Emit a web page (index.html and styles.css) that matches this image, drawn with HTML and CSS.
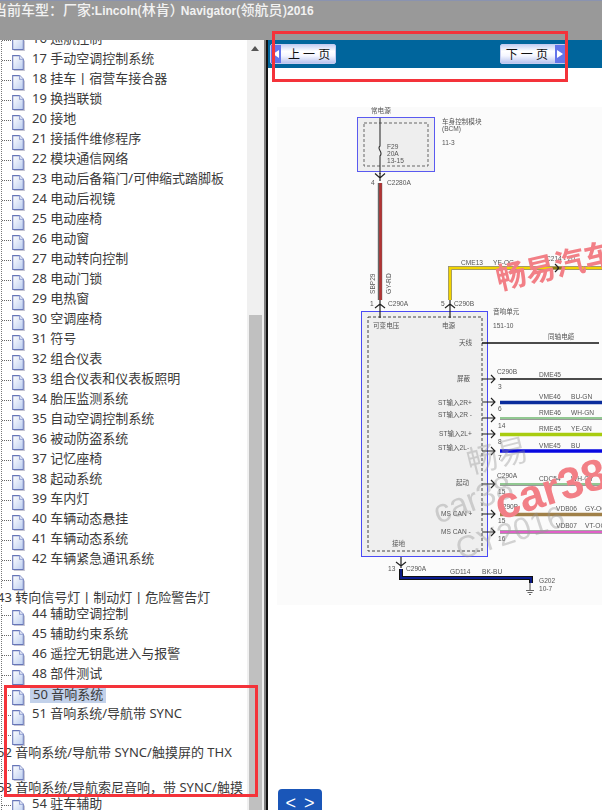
FILE: index.html
```html
<!DOCTYPE html>
<html lang="zh-CN">
<head>
    <meta charset="UTF-8">
    <title>维修手册</title>
    <link rel="stylesheet" href="styles.css">
</head>
<body>
    <svg class="defs" width="0" height="0">
        <defs>
            <linearGradient id="docFill" x1="0" y1="0" x2="1" y2="1">
                <stop offset="0" stop-color="#ffffff"/>
                <stop offset="1" stop-color="#bccef0"/>
            </linearGradient>
            <symbol id="doc" viewBox="0 0 13 16">
                <path d="M1.5 1.5H8L11.5 5V14.5H1.5Z" fill="url(#docFill)" stroke="#6675b8" stroke-width="1"/>
                <path d="M8 1.5V5H11.5" fill="#eef2fb" stroke="#8f9cd0" stroke-width="1"/>
                <path d="M2.5 15.5H12.5V6" fill="none" stroke="#c4c4d2" stroke-width="1"/>
            </symbol>
            <symbol id="chev" viewBox="-6 -4 12 8" overflow="visible">
                <path d="M-5 -3.5L0 1L5 -3.5M0 -4V4" fill="none" stroke="#222" stroke-width="1.2"/>
            </symbol>
        </defs>
    </svg>

    <div class="topbar">当前车型：厂家:<b>Lincoln</b>(林肯<span class="tight">）</span><b>Navigator</b>(领航员)<b>2016</b></div>

    <div class="main">
        <!-- 左侧目录 -->
        <div class="side">
            <ul class="tree">
                <li class="row"><i class="dots"></i><svg class="doc"><use href="#doc"/></svg><span>16 巡航控制</span></li>
                <li class="row"><i class="dots"></i><svg class="doc"><use href="#doc"/></svg><span>17 手动空调控制系统</span></li>
                <li class="row"><i class="dots"></i><svg class="doc"><use href="#doc"/></svg><span>18 挂车丨宿营车接合器</span></li>
                <li class="row"><i class="dots"></i><svg class="doc"><use href="#doc"/></svg><span>19 换挡联锁</span></li>
                <li class="row"><i class="dots"></i><svg class="doc"><use href="#doc"/></svg><span>20 接地</span></li>
                <li class="row"><i class="dots"></i><svg class="doc"><use href="#doc"/></svg><span>21 接插件维修程序</span></li>
                <li class="row"><i class="dots"></i><svg class="doc"><use href="#doc"/></svg><span>22 模块通信网络</span></li>
                <li class="row"><i class="dots"></i><svg class="doc"><use href="#doc"/></svg><span>23 电动后备箱门/可伸缩式踏脚板</span></li>
                <li class="row"><i class="dots"></i><svg class="doc"><use href="#doc"/></svg><span>24 电动后视镜</span></li>
                <li class="row"><i class="dots"></i><svg class="doc"><use href="#doc"/></svg><span>25 电动座椅</span></li>
                <li class="row"><i class="dots"></i><svg class="doc"><use href="#doc"/></svg><span>26 电动窗</span></li>
                <li class="row"><i class="dots"></i><svg class="doc"><use href="#doc"/></svg><span>27 电动转向控制</span></li>
                <li class="row"><i class="dots"></i><svg class="doc"><use href="#doc"/></svg><span>28 电动门锁</span></li>
                <li class="row"><i class="dots"></i><svg class="doc"><use href="#doc"/></svg><span>29 电热窗</span></li>
                <li class="row"><i class="dots"></i><svg class="doc"><use href="#doc"/></svg><span>30 空调座椅</span></li>
                <li class="row"><i class="dots"></i><svg class="doc"><use href="#doc"/></svg><span>31 符号</span></li>
                <li class="row"><i class="dots"></i><svg class="doc"><use href="#doc"/></svg><span>32 组合仪表</span></li>
                <li class="row"><i class="dots"></i><svg class="doc"><use href="#doc"/></svg><span>33 组合仪表和仪表板照明</span></li>
                <li class="row"><i class="dots"></i><svg class="doc"><use href="#doc"/></svg><span>34 胎压监测系统</span></li>
                <li class="row"><i class="dots"></i><svg class="doc"><use href="#doc"/></svg><span>35 自动空调控制系统</span></li>
                <li class="row"><i class="dots"></i><svg class="doc"><use href="#doc"/></svg><span>36 被动防盗系统</span></li>
                <li class="row"><i class="dots"></i><svg class="doc"><use href="#doc"/></svg><span>37 记忆座椅</span></li>
                <li class="row"><i class="dots"></i><svg class="doc"><use href="#doc"/></svg><span>38 起动系统</span></li>
                <li class="row"><i class="dots"></i><svg class="doc"><use href="#doc"/></svg><span>39 车内灯</span></li>
                <li class="row"><i class="dots"></i><svg class="doc"><use href="#doc"/></svg><span>40 车辆动态悬挂</span></li>
                <li class="row"><i class="dots"></i><svg class="doc"><use href="#doc"/></svg><span>41 车辆动态系统</span></li>
                <li class="row"><i class="dots"></i><svg class="doc"><use href="#doc"/></svg><span>42 车辆紧急通讯系统</span></li>
                <li class="row"><i class="dots"></i><svg class="doc"><use href="#doc"/></svg></li>
                <li class="wrapped">43 转向信号灯丨制动灯丨危险警告灯</li>
                <li class="row"><i class="dots"></i><svg class="doc"><use href="#doc"/></svg><span>44 辅助空调控制</span></li>
                <li class="row"><i class="dots"></i><svg class="doc"><use href="#doc"/></svg><span>45 辅助约束系统</span></li>
                <li class="row"><i class="dots"></i><svg class="doc"><use href="#doc"/></svg><span>46 遥控无钥匙进入与报警</span></li>
                <li class="row"><i class="dots"></i><svg class="doc"><use href="#doc"/></svg><span>48 部件测试</span></li>
                <li class="row"><i class="dots"></i><svg class="doc"><use href="#doc"/></svg><span class="selected">50 音响系统</span></li>
                <li class="row"><i class="dots"></i><svg class="doc"><use href="#doc"/></svg><span>51 音响系统/导航带 SYNC</span></li>
                <li class="row"><i class="dots"></i><svg class="doc"><use href="#doc"/></svg></li>
                <li class="wrapped">52 音响系统/导航带 SYNC/触摸屏的 THX</li>
                <li class="row"><i class="dots"></i><svg class="doc"><use href="#doc"/></svg></li>
                <li class="wrapped">53 音响系统/导航索尼音响，带 SYNC/触摸</li>
                <li class="row"><i class="dots"></i><svg class="doc"><use href="#doc"/></svg><span>54 驻车辅助</span></li>
            </ul>
            <div class="scrollbar">
                <div class="scroll-up"></div>
                <div class="scroll-thumb"></div>
            </div>
        </div>

        <!-- 右侧电路图 -->
        <div class="content">
            <div class="pager">
                <a class="page-btn"><b class="arrow arrow-prev"></b>上 一 页</a>
                <a class="page-btn page-next">下 一 页<b class="arrow"></b></a>
            </div>
            <svg class="diagram" viewBox="268 68 334 742" width="334" height="742">
                <rect x="277" y="107" width="325" height="498" fill="#fbfbfb"/>

                <!-- 车身控制模块 -->
                <text class="t" x="371" y="113">常电源</text>
                <rect x="357.5" y="117.5" width="77" height="54" fill="#eeeeee" stroke="#5a5af0" stroke-width="1"/>
                <rect x="364" y="123" width="64" height="43" fill="none" stroke="#666" stroke-dasharray="3 2"/>
                <path d="M380 118V146C376 149 384 152 380 156V174" fill="none" stroke="#333" stroke-width="1.1"/>
                <text class="t" x="387" y="149">F29</text>
                <text class="t" x="387" y="156">20A</text>
                <text class="t" x="387" y="163">13-15</text>
                <text class="t" x="442" y="124">车身控制模块</text>
                <text class="t" x="442" y="131">(BCM)</text>
                <text class="t" x="442" y="145">11-3</text>
                <use href="#chev" x="374" y="173" width="12" height="8"/>
                <text class="t" x="371" y="185">4</text>
                <text class="t" x="387" y="185">C2280A</text>
                <path d="M380 183V300" stroke="#666" stroke-width="4.4"/>
                <path d="M380.5 183V300" stroke="#b23434" stroke-width="2.6"/>
                <text class="t" transform="translate(375 294) rotate(-90)">SBP29</text>
                <text class="t" transform="translate(391 294) rotate(-90)">GY-RD</text>
                <text class="t" x="370" y="306">1</text>
                <text class="t" x="388" y="306">C290A</text>
                <text class="t" x="441" y="306">5</text>
                <text class="t" x="454" y="306">C290B</text>

                <!-- 黄线 -->
                <path d="M450 300V268H602" fill="none" stroke="#888" stroke-width="4"/>
                <path d="M450 300V268H602" fill="none" stroke="#f2d400" stroke-width="2.6"/>
                <text class="t" x="461" y="265">CME13</text>
                <text class="t" x="493" y="265">YE-OG</text>
                <text class="t" x="546" y="261">C214 - 20</text>
                <path d="M555 264L559 268L555 272M552 268H562" fill="none" stroke="#222" stroke-width="1.2"/>

                <!-- 音响单元 -->
                <rect x="361.5" y="311.5" width="126" height="245" fill="#efefef" stroke="#4a4af5" stroke-width="1"/>
                <rect x="368" y="317" width="114" height="234" fill="none" stroke="#444" stroke-dasharray="3 2"/>
                <path d="M380 300V318M450 300V318M375 308L380 304L385 308M445 308L450 304L455 308" fill="none" stroke="#222" stroke-width="1.2"/>
                <text class="t" x="373" y="328">可变电压</text>
                <text class="t" x="442" y="328">电源</text>
                <text class="t" x="493" y="314">音响单元</text>
                <text class="t" x="493" y="328">151-10</text>
                <text class="t" x="459" y="345">天线</text>
                <text class="t" x="548" y="339">同轴电缆</text>
                <path d="M482 343H599" stroke="#111" stroke-width="1.4"/>
                <text class="t" x="457" y="381">屏蔽</text>
                <text class="t" x="438" y="405">ST输入2R+</text>
                <text class="t" x="438" y="417">ST输入2R -</text>
                <text class="t" x="439" y="436">ST输入2L+</text>
                <text class="t" x="438" y="450">ST输入2L-</text>
                <text class="t" x="456" y="485">起动</text>
                <text class="t" x="441" y="516">MS CAN +</text>
                <text class="t" x="441" y="534">MS CAN -</text>
                <text class="t" x="392" y="546">接地</text>

                <!-- 输出线束 -->
                <g fill="none" stroke="#222" stroke-width="1.1">
                    <path d="M482 379H495M491 375L495 379L491 383M482 402H495M491 398L495 402L491 406M482 418H495M491 414L495 418L491 422M482 434H495M491 430L495 434L491 438M482 451H495M491 447L495 451L491 455M482 484H495M491 480L495 484L491 488M482 514H495M491 510L495 514L491 518M482 532H495M491 528L495 532L491 536"/>
                </g>
                <path d="M500 379H602" stroke="#111" stroke-width="1.6"/>
                <path d="M500 402.5H602" stroke="#0a2c9c" stroke-width="3.4"/>
                <path d="M500 418.5H602" stroke="#999" stroke-width="3"/>
                <path d="M500 418H602" stroke="#90d890" stroke-width="1.6"/>
                <path d="M500 434.5H602" stroke="#a8cc10" stroke-width="3.4"/>
                <path d="M500 451H602" stroke="#0808e0" stroke-width="3.4"/>
                <path d="M500 484.5H602" stroke="#999" stroke-width="3"/>
                <path d="M500 484H602" stroke="#90d890" stroke-width="1.6"/>
                <path d="M500 514.5H602" stroke="#a08048" stroke-width="3.4"/>
                <path d="M500 532H602" stroke="#888" stroke-width="3.6"/>
                <path d="M500 532H602" stroke="#e060c8" stroke-width="2"/>

                <text class="t" x="497" y="374">C290B</text>
                <text class="t" x="539" y="377">DME45</text>
                <text class="t" x="498" y="389">3</text>
                <text class="t" x="539" y="399">VME46</text>
                <text class="t" x="571" y="399">BU-GN</text>
                <text class="t" x="498" y="411">6</text>
                <text class="t" x="539" y="415">RME46</text>
                <text class="t" x="571" y="415">WH-GN</text>
                <text class="t" x="498" y="428">14</text>
                <text class="t" x="539" y="431">RME45</text>
                <text class="t" x="571" y="431">YE-GN</text>
                <text class="t" x="498" y="444">8</text>
                <text class="t" x="539" y="448">VME45</text>
                <text class="t" x="571" y="448">BU</text>
                <text class="t" x="498" y="460">7</text>
                <text class="t" x="497" y="478">C290A</text>
                <text class="t" x="539" y="481">CDC54</text>
                <text class="t" x="571" y="481">WH-GY</text>
                <text class="t" x="498" y="494">15</text>
                <text class="t" x="498" y="509">C290B</text>
                <text class="t" x="556" y="511">VDB06</text>
                <text class="t" x="585" y="511">GY-OG</text>
                <text class="t" x="498" y="523">15</text>
                <text class="t" x="556" y="528">VDB07</text>
                <text class="t" x="585" y="528">VT-OG</text>
                <text class="t" x="498" y="541">16</text>

                <!-- 接地 -->
                <path d="M401 557V568M396 562L401 566L406 562" fill="none" stroke="#222" stroke-width="1.2"/>
                <path d="M401 569V578H531V583" fill="none" stroke="#111" stroke-width="4"/>
                <path d="M401 569V578H531V583" fill="none" stroke="#0a1a90" stroke-width="1.8"/>
                <text class="t" x="388" y="571">13</text>
                <text class="t" x="406" y="571">C290A</text>
                <text class="t" x="450" y="574">GD114</text>
                <text class="t" x="482" y="574">BK-BU</text>
                <text class="t" x="539" y="583">G202</text>
                <text class="t" x="539" y="591">10-7</text>
                <path d="M530 583V590M526 590.5H534M527.5 592.5H532.5M529 594.5H531" fill="none" stroke="#666" stroke-width="1.2"/>

                <!-- 水印 -->
                <g class="wm-gray">
                    <text transform="translate(470 474) rotate(-14)" font-size="31">畅易</text>
                    <text transform="translate(438 524) rotate(-20)" font-size="33">car38</text>
                    <text transform="translate(460 560) rotate(-18)" font-size="31">CY2016</text>
                </g>
                <g class="wm-red">
                    <text transform="translate(499 290) rotate(-13)" font-size="30">畅易汽车</text>
                    <text transform="translate(500 520) rotate(-17)" font-size="44">car38</text>
                </g>
            </svg>
            <a class="float-btn">&lt; &gt;</a>
        </div>
    </div>

    <!-- 红框标注 -->
    <div class="mark mark-pager"></div>
    <div class="mark mark-tree"></div>
</body>
</html>
```

FILE: styles.css
```css
* {
    box-sizing: border-box;
}

body {
    margin: 0;
    width: 602px;
    height: 810px;
    overflow: hidden;
    position: relative;
    display: flex;
    flex-direction: column;
    font-family: "Noto Sans", "Noto Sans CJK SC", sans-serif;
    background: #fff;
}

.defs {
    position: absolute;
}

.topbar {
    height: 40px;
    flex: none;
    background: #999;
    border-top: 1px solid #8a93b0;
    color: #f2f2f2;
    font-size: 14px;
    font-weight: 500;
    line-height: 17px;
    text-indent: -7px;
    white-space: nowrap;
    overflow: hidden;
}

.topbar b {
    font-family: "Liberation Sans", sans-serif;
    font-size: 12px;
    font-weight: bold;
}

.topbar .tight {
    letter-spacing: -3px;
}

.main {
    flex: 1;
    display: flex;
    min-height: 0;
}

.side {
    width: 268px;
    flex: none;
    display: flex;
    border-right: 2px solid #111;
    overflow: hidden;
    background: #fff;
    box-shadow: inset -2px 0 0 #808080;
}

.tree {
    width: 247px;
    flex: none;
    list-style: none;
    margin: -11px 0 0;
    padding: 0;
    overflow: hidden;
    color: #3a3a3a;
    font-size: 13px;
    background-image: linear-gradient(#777 50%, transparent 50%);
    background-size: 1px 2px;
    background-repeat: repeat-y;
    background-position: 1px 0;
}

.row {
    height: 20px;
    display: flex;
    align-items: flex-start;
    line-height: 18px;
    white-space: nowrap;
    padding-left: 2px;
}

.dots {
    width: 9px;
    height: 0;
    margin-top: 11px;
    flex: none;
    border-top: 1px dotted #666;
}

.doc {
    width: 14px;
    height: 17px;
    margin-top: 5px;
    flex: none;
}

.row span {
    margin-left: 7px;
}

.row .selected {
    margin-left: 5px;
    padding: 0 3px;
    height: 16px;
    margin-top: 3px;
    line-height: 14px;
    background: #c2d1ea;
}

.wrapped {
    height: 15px;
    line-height: 16px;
    margin-left: -3px;
    white-space: nowrap;
    background: #fff;
}

.scrollbar {
    width: 17px;
    flex: none;
    margin-right: 2px;
    background: #f0f0f0;
    display: flex;
    flex-direction: column;
    padding: 0 2px;
}

.scroll-up {
    width: 0;
    height: 0;
    margin: 6px 0 0 2px;
    border-left: 4px solid transparent;
    border-right: 4px solid transparent;
    border-bottom: 5px solid #555;
}

.scroll-thumb {
    height: 495px;
    margin-top: 264px;
    background: #c0c0c0;
}

.content {
    flex: 1;
    min-width: 0;
    position: relative;
    overflow: hidden;
}

.pager {
    height: 28px;
    background: #00659c;
    display: flex;
    justify-content: space-between;
    align-items: flex-start;
    padding: 4px 36px 0 2px;
}

.page-btn {
    width: 66px;
    height: 20px;
    display: flex;
    align-items: center;
    gap: 7px;
    font-size: 12px;
    color: #111;
    white-space: nowrap;
    background: linear-gradient(#c9d2f4, #ffffff 35%, #f4f6ff 60%, #b9c4ee);
    border: 1px solid #c5cdf0;
    border-radius: 2px;
}

.page-next {
    justify-content: flex-end;
    padding-left: 8px;
}

.arrow {
    width: 10px;
    height: 18px;
    flex: none;
    position: relative;
    background: #6475ea;
}

.arrow::after {
    content: "";
    position: absolute;
    left: 2px;
    top: 5px;
    width: 0;
    height: 0;
    border-top: 4px solid transparent;
    border-bottom: 4px solid transparent;
    border-left: 6px solid #fff;
}

.arrow-prev::after {
    border-left: 0;
    border-right: 6px solid #fff;
}

.diagram {
    display: block;
    margin-top: -28px;
    position: relative;
    top: 28px;
    filter: blur(0.35px);
    pointer-events: none;
}

.diagram .t {
    font-family: "Liberation Sans", "Noto Sans CJK SC", sans-serif;
    font-size: 6.6px;
    fill: #555;
}

.wm-gray text {
    font-family: "Liberation Sans", "Noto Sans CJK SC", sans-serif;
    fill: rgba(150, 150, 150, 0.4);
}

.wm-red text {
    font-family: "Liberation Sans", "Noto Sans CJK SC", sans-serif;
    font-weight: bold;
    fill: #f27f86;
}

.float-btn {
    position: absolute;
    left: 10px;
    top: 749px;
    width: 44px;
    height: 24px;
    overflow: hidden;
    background: #1a56b8;
    border-radius: 4px;
    color: #fff;
    font-family: "Liberation Sans", sans-serif;
    font-size: 18px;
    word-spacing: 3px;
    line-height: 29px;
    text-align: center;
}

.mark {
    position: absolute;
    border: 3px solid #f4333a;
}

.mark-pager {
    left: 272px;
    top: 31px;
    width: 296px;
    height: 51px;
}

.mark-tree {
    left: 4px;
    top: 685px;
    width: 254px;
    height: 112px;
}
```
